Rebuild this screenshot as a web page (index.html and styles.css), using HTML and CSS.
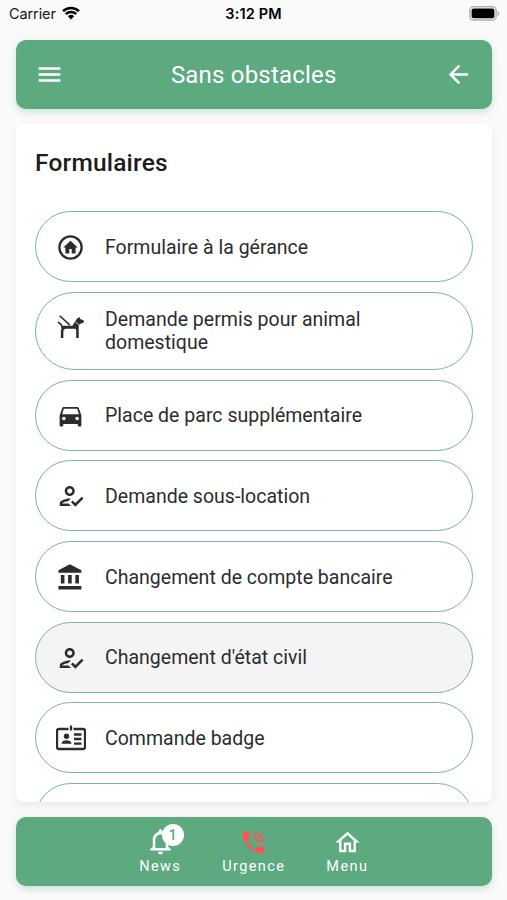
FILE: index.html
```html
<!DOCTYPE html>
<html lang="fr">
<head>
<meta charset="utf-8">
<title>Sans obstacles</title>
<link rel="stylesheet" href="styles.css">
</head>
<body>
<svg width="0" height="0" class="defs">
  <symbol id="person-check" viewBox="0 0 24 24"><path d="M11 12c2.21 0 4-1.79 4-4s-1.79-4-4-4-4 1.79-4 4 1.79 4 4 4zm0-6c1.1 0 2 .9 2 2s-.9 2-2 2-2-.9-2-2 .9-2 2-2zm-1 12H5c.2-.63 2.57-1.68 4.96-1.94l2.04-2c-.39-.04-.68-.06-1-.06-2.67 0-8 1.34-8 4v2h9l-2-2zm10.6-5.5l-5.13 5.17-2.07-2.08L12 17l3.47 3.5L22 13.91z"/></symbol>
</svg>
<div class="status">
  <div class="carrier"><span>Carrier</span>
    <svg class="wifi" viewBox="0 0 18 14"><path d="M1 5.1a11.6 11.6 0 0 1 16 0M3.8 8a7.5 7.5 0 0 1 10.4 0" fill="none" stroke="#000" stroke-width="2.5"/><path d="M5.9 10.2a4.6 4.6 0 0 1 6.2 0L9 13.4z"/></svg>
  </div>
  <div class="clock">3:12 PM</div>
  <svg class="battery" viewBox="0 0 31 15"><rect x=".8" y=".8" width="26.4" height="13.2" rx="3.8" fill="#fafafa" stroke="#b0b0b0" stroke-width="1.4"/><rect x="2.6" y="2.6" width="22.8" height="9.6" rx="2"/><path d="M28.6 5v5q1.8-.8 1.8-2.500t-1.800-2.500z" fill="#b0b0b0"/></svg>
</div>
<header class="bar top">
  <svg class="icon" viewBox="0 0 24 24"><path d="M3 18h18v-2H3v2zm0-5h18v-2H3v2zm0-7v2h18V6H3z"/></svg>
  <h1>Sans obstacles</h1>
  <svg class="icon" viewBox="0 0 24 24"><path d="M20 11H7.830l5.590-5.590L12 4l-8 8 8 8 1.410-1.410L7.830 13H20v-2z"/></svg>
</header>
<main class="card">
  <h2>Formulaires</h2>
  <div class="list">
    <div class="pill"><svg class="icon" viewBox="0 0 24 24"><circle cx="12" cy="12" r="9.200" fill="none" stroke="currentColor" stroke-width="1.900"/><path d="M12 6.500l-6 5.500h1.800v5h3.200v-3.800h2v3.800h3.200v-5H18z"/></svg><span>Formulaire à la gérance</span></div>
    <div class="pill tall"><svg class="icon dog" viewBox="0 0 24 24"><path d="M3 2.300L11.500 10M1.700 7.300l3.300 3.200" fill="none" stroke="currentColor" stroke-width="1.300"/><path d="M4 10.600h9.600l2-3.300 3.200 2.700V20.600h-2.100v-6.800l-1-.8H7.500l-1.400 1.600v6H4v-6.200l.6-1.400z"/><path d="M15.800 6.800l1.700-2.300 1.900-1.100.7 1.500 2.900 1.400v1.600l-2.700 1-1 .8z"/></svg><span>Demande permis pour animal domestique</span></div>
    <div class="pill"><svg class="icon" viewBox="0 0 24 24"><path d="M5 11L6.500 6.500H17.500L19 11M17.500 16A1.500 1.500 0 0 1 16 14.500A1.500 1.500 0 0 1 17.500 13A1.500 1.500 0 0 1 19 14.500A1.500 1.500 0 0 1 17.500 16M6.500 16A1.500 1.500 0 0 1 5 14.500A1.500 1.500 0 0 1 6.500 13A1.500 1.500 0 0 1 8 14.500A1.500 1.500 0 0 1 6.500 16M18.920 6C18.720 5.420 18.160 5 17.500 5H6.500C5.840 5 5.280 5.420 5.080 6L3 12V20A1 1 0 0 0 4 21H5A1 1 0 0 0 6 20V19H18V20A1 1 0 0 0 19 21H20A1 1 0 0 0 21 20V12L18.920 6Z"/></svg><span>Place de parc supplémentaire</span></div>
    <div class="pill"><svg class="icon person"><use href="#person-check"/></svg><span>Demande sous-location</span></div>
    <div class="pill"><svg class="icon" viewBox="0 0 24 24"><path d="M4 10v7h3v-7H4zm6 0v7h3v-7h-3zM2 22h19v-3H2v3zm14-12v7h3v-7h-3zm-4.500-9L2 6v2h19V6l-9.500-5z"/></svg><span>Changement de compte bancaire</span></div>
    <div class="pill active"><svg class="icon person"><use href="#person-check"/></svg><span>Changement d'état civil</span></div>
    <div class="pill"><svg class="icon badge-icon" viewBox="0 0 30 26"><path d="M12.500 4H3a2 2 0 0 0-2 2v16a2 2 0 0 0 2 2h24a2 2 0 0 0 2-2V6a2 2 0 0 0-2-2h-9.500M15 .5v5M18 9.500h7.500M18 14h7.500M18 18.700h7.500" fill="none" stroke="currentColor" stroke-width="2.300"/><circle cx="10.500" cy="11.200" r="2.700"/><path d="M5.500 18.700c0-4.600 10-4.600 10 0z"/></svg><span>Commande badge</span></div>
    <div class="pill"></div>
  </div>
</main>
<nav class="bar bottom">
  <div class="tab"><div class="bell"><svg class="icon" viewBox="0 0 24 24"><path d="M12 22c1.100 0 2-.9 2-2h-4c0 1.100.9 2 2 2zm6-6v-5c0-3.070-1.630-5.640-4.500-6.320V4c0-.83-.67-1.500-1.500-1.500s-1.500.67-1.500 1.500v.68C7.640 5.360 6 7.920 6 11v5l-2 2v1h16v-1l-2-2zm-2 1H8v-6c0-2.480 1.510-4.500 4-4.500s4 2.020 4 4.500v6z"/></svg><b class="count">1</b></div><span>News</span></div>
  <div class="tab"><svg class="icon urgent" viewBox="0 0 24 24"><path d="M20 15.500c-1.250 0-2.450-.2-3.570-.57-.35-.11-.74-.03-1.020.24l-2.200 2.200c-2.830-1.440-5.150-3.750-6.590-6.590l2.200-2.210c.28-.26.36-.65.25-1C8.700 6.450 8.500 5.250 8.500 4c0-.55-.45-1-1-1H4c-.55 0-1 .45-1 1 0 9.390 7.610 17 17 17 .55 0 1-.45 1-1v-3.500c0-.55-.45-1-1-1zM19 12h2c0-4.970-4.030-9-9-9v2c3.870 0 7 3.130 7 7zm-4 0h2c0-2.760-2.240-5-5-5v2c1.660 0 3 1.340 3 3z"/></svg><span>Urgence</span></div>
  <div class="tab"><svg class="icon" viewBox="0 0 24 24"><path d="M12 5.690l5 4.500V18h-2v-6H9v6H7v-7.810l5-4.500M12 3L2 12h3v8h6v-6h2v6h6v-8h3L12 3z"/></svg><span>Menu</span></div>
</nav>
</body>
</html>
```
FILE: styles.css
```css
* { box-sizing: border-box; }
body {
  margin: 0;
  height: 900px;
  overflow: hidden;
  background: #fafafa;
  color: #2c2c2e;
  font-family: Roboto, "Liberation Sans", sans-serif;
  display: flex;
  flex-direction: column;
}
.defs { position: absolute; }
.icon { width: 29px; height: 29px; flex: none; fill: currentColor; }
.status {
  height: 40px;
  padding: 5px 7px 0 9px;
  display: grid;
  grid-template-columns: 1fr auto 1fr;
  align-items: start;
  font: 14.500px/18px Inter, sans-serif;
  color: #161616;
}
.carrier { display: flex; gap: 6px; letter-spacing: -.1px; }
.wifi { width: 18px; height: 14px; margin-top: 1px; }
.clock { font-weight: 600; letter-spacing: .15px; color: #000; margin-left: -2px; }
.battery { width: 31px; height: 15px; justify-self: end; margin-top: 1px; }
.bar {
  margin: 0 15px 0 15.500px;
  height: 68.500px;
  flex: none;
  border-radius: 10px;
  background: #5da980;
  color: #fff;
  box-shadow: 0 3px 7px rgba(93, 169, 128, .3);
  display: flex;
}
.top { align-items: center; justify-content: space-between; padding: 0 19px; }
h1 { margin: 0; padding-top: 1px; font-size: 24px; font-weight: 400; letter-spacing: .2px; }
.card {
  margin: 15.500px 15px 15px 15.500px;
  height: 678px;
  overflow: hidden;
  flex: none;
  padding: 0 19.500px;
  border-radius: 8px;
  background: #fff;
  box-shadow: 0 3px 9px rgba(0, 0, 0, .07);
}
h2 { margin: 0; padding-top: 23.500px; height: 87.300px; font-size: 24.500px; line-height: 30px; font-weight: 500; color: #1c1c1e; letter-spacing: .2px; }
.list { display: flex; flex-direction: column; gap: 9.600px; }
.pill {
  height: 71.100px;
  flex: none;
  display: flex;
  align-items: center;
  gap: 20px;
  padding: 1px 70px 0 20px;
  border: 1.500px solid #78b79a;
  border-radius: 40px;
  font-size: 19.500px;
  line-height: 23px;
  letter-spacing: .01px;
}
.tall { height: 78px; padding-top: 0; }
.active { background: #f4f4f4; }
.person { width: 30px; height: 30px; margin-right: -1px; }
.badge-icon { width: 30px; height: 26px; margin-right: -1px; }
.dog { margin-top: -7px; }
.bottom { justify-content: center; gap: 41px; padding-top: 11px; }
.tab { display: flex; flex-direction: column; align-items: center; font-size: 14.500px; line-height: 17px; letter-spacing: 1.400px; }
.tab > span { margin-top: 1px; }
.urgent { color: #ff5359; }
.bell { position: relative; height: 29px; }
.bell .icon { display: block; width: 31px; height: 31px; margin-top: -2px; }
.count {
  position: absolute;
  left: 17px;
  top: -4px;
  width: 22px;
  height: 22px;
  border-radius: 50%;
  background: #fff;
  color: #5da980;
  font: 500 14px/22px Roboto, sans-serif;
  text-align: center;
  letter-spacing: 0;
}
```
